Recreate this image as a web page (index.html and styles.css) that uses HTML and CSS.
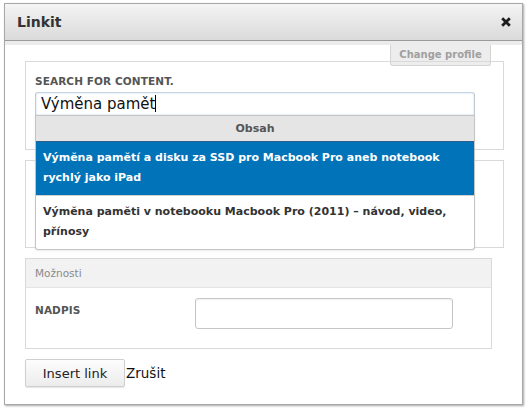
FILE: index.html
```html
<!DOCTYPE html>
<html>
<head>
<meta charset="utf-8">
<link rel="stylesheet" href="styles.css">
</head>
<body>
<div class="dialog">
  <div class="titlebar">
    <span class="title">Linkit</span>
    <span class="close" aria-label="close">
      <svg width="10" height="10" viewBox="0 0 10 10"><path d="M1.2 1.2 L8.8 8.8 M8.8 1.2 L1.2 8.8" stroke="#1e1e1e" stroke-width="2.8" stroke-linecap="butt"/></svg>
    </span>
  </div>
  <div class="strip">
    <div class="tab">Change profile</div>
  </div>
  <div class="content">
    <div class="fieldset search">
      <label class="label">SEARCH FOR CONTENT.</label>
      <div class="searchwrap">
        <div class="input focused">Výměna pamět<span class="caret"></span></div>
        <div class="dropdown">
          <div class="dd-head">Obsah</div>
          <div class="dd-item selected">Výměna pamětí a disku za SSD pro Macbook Pro aneb notebook rychlý jako iPad</div>
          <div class="dd-item">Výměna paměti v notebooku Macbook Pro (2011) – návod, video, přínosy</div>
        </div>
      </div>
    </div>
    <div class="fieldset hidden-box"></div>
    <div class="fieldset options">
      <div class="opt-head">Možnosti</div>
      <div class="opt-row">
        <span class="label">NADPIS</span>
        <div class="input small"></div>
      </div>
    </div>
    <div class="actions">
      <button class="btn">Insert link</button><span class="cancel">Zrušit</span>
    </div>
  </div>
</div>
</body>
</html>
```

FILE: styles.css
```css
html, body {
  margin: 0;
  padding: 0;
  background: #fff;
}
body {
  font-family: "DejaVu Sans", Verdana, sans-serif;
  color: #333;
  width: 527px;
  height: 408px;
  overflow: hidden;
  position: relative;
}
.dialog {
  margin: 3px 0 0 4px;
  width: 517px;
  height: 400px;
  border: 1px solid #a8a8a8;
  box-shadow: 1px 1px 2px rgba(0,0,0,0.35);
  background: #fff;
}
.titlebar {
  height: 36px;
  background: linear-gradient(#f4f4f4, #dadada);
  border-bottom: 1px solid #9a9a9a;
  display: flex;
  align-items: center;
  justify-content: space-between;
  padding: 0 11px 0 12px;
}
.title {
  font-weight: bold;
  font-size: 14px;
  color: #333;
}
.close {
  display: flex;
  width: 10px;
  height: 10px;
}
.strip {
  height: 4px;
  background: #ececec;
  position: relative;
}
.tab {
  position: absolute;
  right: 31px;
  top: 4px;
  width: 101px;
  height: 21px;
  box-sizing: border-box;
  border: 1px solid #d4d4d4;
  border-top: none;
  border-radius: 0 0 3px 3px;
  background: #ededed;
  color: #a0a0a0;
  font-size: 10px;
  font-weight: bold;
  text-align: center;
  line-height: 19px;
}
.content {
  padding: 16px 18px 0 20px;
}
.fieldset {
  border: 1px solid #d9d9d9;
  box-sizing: border-box;
}
.search {
  height: 89px;
  padding: 13px 9px 0 9px;
  position: relative;
  z-index: 2;
}
.label {
  display: block;
  font-size: 10.5px;
  font-weight: bold;
  color: #555;
  letter-spacing: 0.1px;
}
.searchwrap {
  position: relative;
  margin-top: 5px;
  width: 440px;
}
.input {
  box-sizing: border-box;
  border: 1px solid #ccc;
  border-radius: 3px;
  background: #fff;
}
.input.focused {
  height: 24px;
  border-color: #c6d2de #c0c8d0 #c8c8c8 #c8c8c8;
  box-shadow: inset 0 0 2px #b8d0ea;
  font-size: 15px;
  line-height: 22px;
  padding-left: 5px;
  color: #111;
  font-family: "DejaVu Sans", Verdana, sans-serif;
  border-radius: 3px 3px 0 0;
}
.caret {
  display: inline-block;
  width: 1px;
  height: 17px;
  background: #000;
  vertical-align: -3px;
}
.dropdown {
  position: absolute;
  left: 0;
  top: 23px;
  width: 440px;
  box-sizing: border-box;
  border: 1px solid #c4c4c4;
  border-top: none;
  border-radius: 0 0 3px 3px;
  background: #fff;
  box-shadow: 0 1px 2px rgba(0,0,0,0.08);
}
.dd-head {
  height: 27px;
  background: #e5e5e5;
  border-top: 1px solid #c4c4c4;
  border-bottom: 1px solid #2b5f8a;
  box-sizing: border-box;
  text-align: center;
  font-size: 11px;
  font-weight: bold;
  color: #555;
  line-height: 26px;
}
.dd-item {
  padding: 6px 7px 7px 7px;
  font-size: 11px;
  font-weight: bold;
  line-height: 20px;
  color: #333;
}
.dd-item.selected {
  background: #0073b9;
  color: #fff;
  border-bottom: 1px solid #d0d0d0;
}
.hidden-box {
  margin-top: 10px;
  height: 88px;
}
.options {
  margin-top: 10px;
  height: 91px;
  width: 467px;
}
.opt-head {
  background: #f2f2f2;
  border-bottom: 1px solid #e4e4e4;
  height: 29px;
  box-sizing: border-box;
  padding-left: 9px;
  font-size: 10.5px;
  color: #8a8a8a;
  line-height: 28px;
}
.opt-row {
  display: flex;
  align-items: flex-start;
  padding: 10px 0 0 9px;
}
.opt-row .label {
  width: 160px;
  margin-top: 6px;
}
.input.small {
  width: 258px;
  height: 31px;
  border-color: #c6c6c6;
  box-shadow: inset 0 1px 2px rgba(0,0,0,0.06);
}
.actions {
  margin-top: 10px;
  display: flex;
  align-items: center;
}
.btn {
  font-family: "DejaVu Sans", Verdana, sans-serif;
  font-size: 13px;
  color: #222;
  height: 28px;
  width: 100px;
  padding: 0;
  border: 1px solid #cfcfcf;
  border-radius: 2px;
  background: linear-gradient(#fdfdfd, #ececec);
  box-shadow: 0 1px 1px rgba(0,0,0,0.1);
}
.cancel {
  font-size: 13.5px;
  color: #111;
  margin-left: 1px;
}
```
